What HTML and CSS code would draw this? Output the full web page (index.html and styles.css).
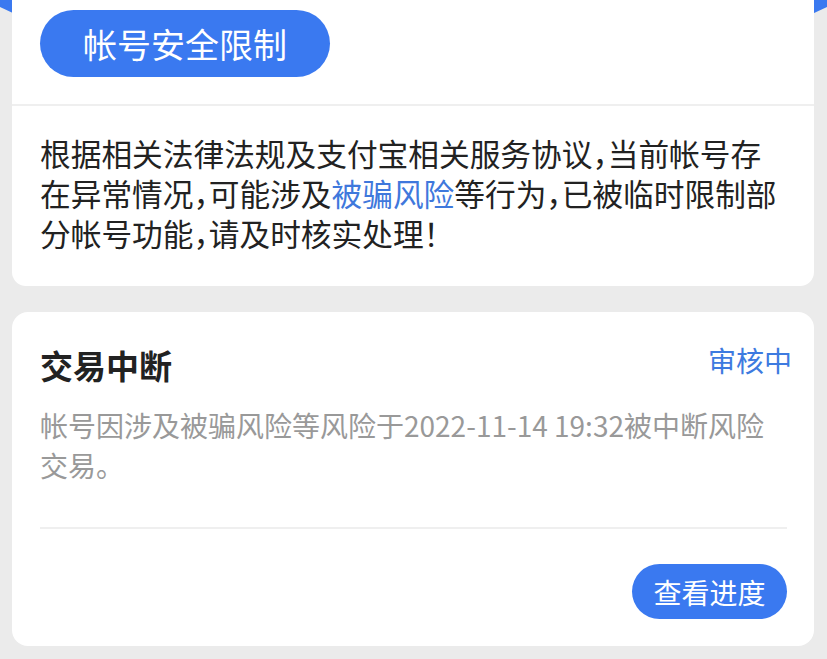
FILE: index.html
```html
<!DOCTYPE html>
<html lang="zh-CN">
<head>
<meta charset="utf-8">
<title>帐号安全限制</title>
<link rel="stylesheet" href="styles.css">
</head>
<body>
<div class="header-bg"></div>
<div class="page">
  <section class="card card-top">
    <div class="card-head">
      <div class="pill-btn big">帐号安全限制</div>
    </div>
    <p class="notice">根据相关法律法规及支付宝相关服务协议，当前帐号存在异常情况，可能涉及<span class="link">被骗风险</span>等行为，已被临时限制部分帐号功能，请及时核实处理！</p>
  </section>
  <section class="card card-item">
    <div class="item-head">
      <h2 class="item-title">交易中断</h2>
      <span class="item-status">审核中</span>
    </div>
    <p class="item-desc">帐号因涉及被骗风险等风险于2022-11-14 19:32被中断风险交易。</p>
    <div class="item-foot">
      <div class="pill-btn small">查看进度</div>
    </div>
  </section>
</div>
</body>
</html>
```
FILE: styles.css
```css
* { box-sizing: border-box; }
html, body { margin: 0; padding: 0; }
body {
  background: #ebebeb;
  font-family: "Noto Sans CJK SC", "Noto Sans", sans-serif;
  color: #222;
  width: 827px;
  height: 659px;
  overflow: hidden;
  position: relative;
}
.header-bg {
  position: absolute;
  left: 0; top: 0;
  width: 827px;
  height: 220px;
  background: #3a79f0;
  clip-path: polygon(0 0, 100% 0, 100% 7px, 50% 200px, 0 7px);
  z-index: 0;
}
.page {
  position: relative;
  z-index: 1;
  padding: 0 13px 0 12px;
  display: flex;
  flex-direction: column;
  gap: 26px;
}
.card {
  background: #fff;
}
.card-top {
  border-radius: 0 0 14px 14px;
}
.card-head {
  padding: 10px 28px 27px;
  border-bottom: 2px solid #efefef;
}
.pill-btn {
  display: inline-flex;
  align-items: center;
  justify-content: center;
  background: #3a79f0;
  color: #fff;
  border-radius: 999px;
}
.pill-btn.big {
  width: 290px;
  height: 67px;
  font-size: 34px;
  line-height: 1;
}
.notice {
  margin: 0;
  padding: 27px 28px 33px;
  font-size: 30.7px;
  line-height: 40px;
  color: #222;
  font-feature-settings: "halt";
}
.link { color: #3f78dc; }
.card-item {
  border-radius: 16px;
  padding: 33px 27px 27px 28px;
}
.item-head {
  display: flex;
  justify-content: space-between;
  align-items: flex-start;
}
.item-title {
  margin: 0;
  font-size: 33px;
  line-height: 40px;
  font-weight: 700;
  color: #222;
}
.item-status {
  font-size: 28px;
  line-height: 30px;
  color: #3d7ae0;
  margin-right: -5px;
}
.item-desc {
  margin: 20px 0 0;
  font-size: 28px;
  line-height: 40px;
  color: #999;
}
.item-foot {
  margin-top: 42px;
  border-top: 2px solid #efefef;
  padding-top: 35px;
  display: flex;
  justify-content: flex-end;
}
.pill-btn.small {
  width: 155px;
  height: 55px;
  font-size: 28px;
  line-height: 1;
}
```
